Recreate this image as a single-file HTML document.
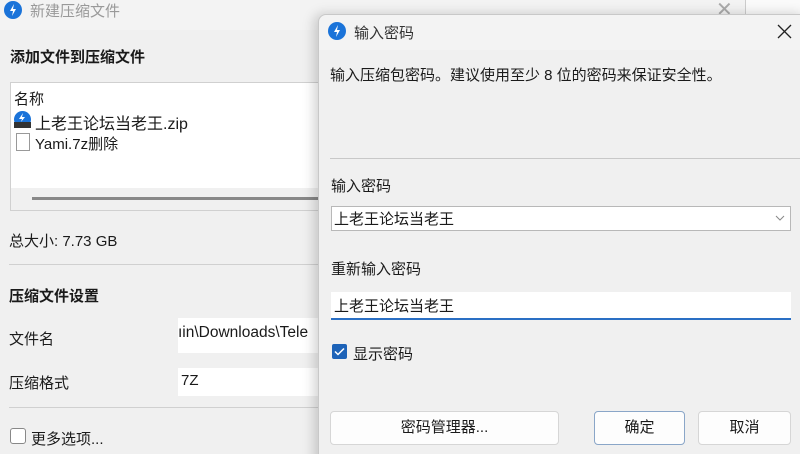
<!DOCTYPE html>
<html><head><meta charset="utf-8"><style>
*{box-sizing:border-box;margin:0;padding:0}
html,body{width:800px;height:454px;overflow:hidden}
body{background:#f0f0f0;font-family:"Liberation Sans","Noto Sans CJK SC",sans-serif;font-size:15px;color:#1a1a1a;position:relative}
.a{position:absolute;white-space:nowrap}
.logo{position:absolute;width:18px;height:18px;border-radius:50%;background:#1a73d9}
.logo svg{position:absolute;left:0;top:0}
.btn{position:absolute;background:#fdfdfd;border:1px solid #d6d6d6;border-radius:4px;text-align:center;line-height:31px;font-size:15px}
</style></head><body>
<div class="a" style="left:0;top:0;width:745px;height:30px;background:#f3f3f3"></div>
<div class="a" style="left:745px;top:0;width:55px;height:20px;background:#fafafa;border-left:1px solid #ccc"></div>
<div class="logo" style="left:4px;top:1px"><svg width="18" height="18"><path d="M10 3 L6 10 L9 10 L8 15 L12 8 L9 8 Z" fill="#fff"/></svg></div>
<div class="a" style="left:30px;top:0px;color:#999;font-size:15px">新建压缩文件</div>
<div class="a" style="left:716px;top:-3px;color:#aaa;font-size:20px">✕</div>
<div class="a" style="left:10px;top:46px;font-weight:bold;font-size:15px">添加文件到压缩文件</div>
<div class="a" style="left:10px;top:82px;width:320px;height:129px;background:#fff;border:1px solid #d0d0d0"></div>
<div class="a" style="left:11px;top:188px;width:320px;height:22px;background:#f0f0f0"></div>
<div class="a" style="left:32px;top:197px;width:300px;height:3px;background:#888"></div>
<div class="a" style="left:14px;top:88px">名称</div>
<div class="logo" style="left:14px;top:111px;width:17px;height:17px"><svg width="17" height="17"><path d="M9 2 L5 8 L8 8 L7 11 L11 6 L8 6 Z" fill="#fff"/><rect x="0" y="11" width="17" height="6" fill="#333"/></svg></div>
<div class="a" style="left:35px;top:110px;font-size:16px">上老王论坛当老王.zip</div>
<div class="a" style="left:16px;top:133px;width:14px;height:18px;background:#fff;border:1px solid #999"></div>
<div class="a" style="left:35px;top:133px">Yami.7z删除</div>
<div class="a" style="left:9px;top:230px">总大小: 7.73 GB</div>
<div class="a" style="left:9px;top:264px;width:320px;height:1px;background:#d0d0d0"></div>
<div class="a" style="left:9px;top:285px;font-weight:bold">压缩文件设置</div>
<div class="a" style="left:9px;top:328px">文件名</div>
<div class="a" style="left:178px;top:318px;width:150px;height:35px;background:#fff"></div>
<div class="a" style="left:178px;top:324px;font-size:15.5px">ıin\Downloads\Tele</div>
<div class="a" style="left:9px;top:372px">压缩格式</div>
<div class="a" style="left:178px;top:368px;width:150px;height:28px;background:#fff"></div>
<div class="a" style="left:181px;top:372px">7Z</div>
<div class="a" style="left:9px;top:407px;width:320px;height:1px;background:#d0d0d0"></div>
<div class="a" style="left:10px;top:428px;width:16px;height:16px;border:1px solid #888;border-radius:3px;background:#fff"></div>
<div class="a" style="left:31px;top:428px">更多选项...</div>
<div class="a" style="left:318px;top:14px;width:490px;height:460px;background:#f0f0f0;border:1px solid #c8c8c8;border-radius:8px;box-shadow:-4px 0 12px rgba(0,0,0,.18)"></div>
<div class="a" style="left:319px;top:15px;width:481px;height:35px;background:#f3f3f3;border-radius:8px 0 0 0"></div>
<div class="logo" style="left:328px;top:22px"><svg width="18" height="18"><path d="M10 3 L6 10 L9 10 L8 15 L12 8 L9 8 Z" fill="#fff"/></svg></div>
<div class="a" style="left:354px;top:22px;color:#333">输入密码</div>
<svg class="a" style="left:777px;top:24px" width="15" height="15"><path d="M1 1L14 14M14 1L1 14" stroke="#222" stroke-width="1.3"/></svg>
<div class="a" style="left:330px;top:64px">输入压缩包密码。建议使用至少 8 位的密码来保证安全性。</div>
<div class="a" style="left:330px;top:158px;width:470px;height:1px;background:#c8c8c8"></div>
<div class="a" style="left:331px;top:175px">输入密码</div>
<div class="a" style="left:331px;top:206px;width:460px;height:25px;background:#fff;border:1px solid #b8b8b8"></div>
<div class="a" style="left:334px;top:208px">上老王论坛当老王</div>
<svg class="a" style="left:775px;top:215px" width="10" height="7"><path d="M1 1L5 5L9 1" stroke="#888" fill="none"/></svg>
<div class="a" style="left:331px;top:258px">重新输入密码</div>
<div class="a" style="left:331px;top:292px;width:460px;height:28px;background:#fff;border-bottom:2px solid #2a6fc4"></div>
<div class="a" style="left:334px;top:295px">上老王论坛当老王</div>
<div class="a" style="left:332px;top:344px;width:15px;height:15px;background:#1d63b8;border-radius:2px"><svg width="15" height="15"><path d="M3 7.5L6 10.5L12 4.5" stroke="#fff" stroke-width="1.5" fill="none"/></svg></div>
<div class="a" style="left:353px;top:343px">显示密码</div>
<div class="btn" style="left:330px;top:411px;width:229px;height:34px">密码管理器...</div>
<div class="btn" style="left:594px;top:411px;width:91px;height:34px;border-color:#8aa6c8">确定</div>
<div class="btn" style="left:698px;top:411px;width:93px;height:34px">取消</div>
</body></html>
